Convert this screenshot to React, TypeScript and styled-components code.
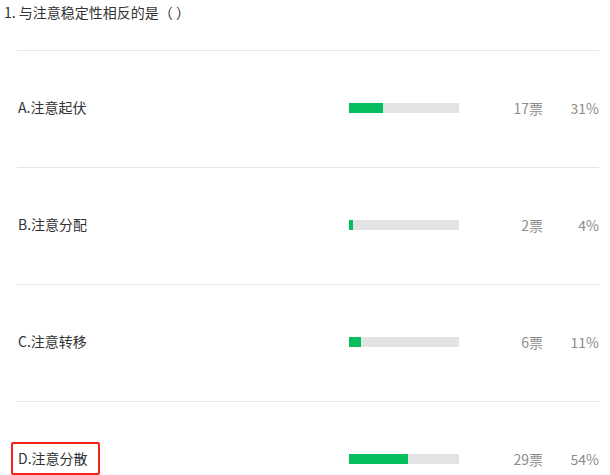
import React from 'react'
import styled, { createGlobalStyle } from 'styled-components'

const GlobalStyle = createGlobalStyle`
  body {
    margin: 0;
    background: #fff;
    font-family: "Microsoft YaHei", "Noto Sans CJK SC", "Noto Sans", sans-serif;
  }
`

interface Option {
  label: string
  votes: number
  percent: number
  marked?: boolean
}

const options: Option[] = [
  { label: 'A.注意起伏', votes: 17, percent: 31 },
  { label: 'B.注意分配', votes: 2, percent: 4 },
  { label: 'C.注意转移', votes: 6, percent: 11 },
  { label: 'D.注意分散', votes: 29, percent: 54, marked: true },
]

const Page = styled.div`
  width: 610px;
  height: 475px;
  overflow: hidden;
`
const Title = styled.div`
  height: 50px;
  padding: 2px 0 0 4px;
  box-sizing: border-box;
  font-size: 14px;
  line-height: 20px;
  color: #333;
`
const List = styled.div`
  margin: 0 11px 0 17px;
`
const Row = styled.div`
  display: flex;
  align-items: center;
  height: 117px;
  box-sizing: border-box;
  border-top: 1px solid #e6e6e6;
  padding-bottom: 3px;
`
const Label = styled.div<{ $marked?: boolean }>`
  flex: 0 0 auto;
  margin-left: -6px;
  padding: 5px 10px 5px 5px;
  border: 2px solid ${p => (p.$marked ? '#f5221b' : 'transparent')};
  border-radius: 2px;
  font-size: 14px;
  line-height: 19px;
  color: #333;
`
const Spacer = styled.div`
  flex: 1;
`
const Track = styled.div`
  width: 110px;
  height: 10px;
  background: #e2e3e5;
  display: flex;
`
const Fill = styled.div`
  height: 100%;
  background: #07be5e;
`
const Votes = styled.div`
  width: 84px;
  text-align: right;
  font-size: 14px;
  color: #8c8c8c;
`
const Percent = styled.div`
  width: 56px;
  text-align: right;
  font-size: 14px;
  color: #8c8c8c;
`

export default function App() {
  return (
    <Page>
      <GlobalStyle />
      <Title>1. 与注意稳定性相反的是（ ）</Title>
      <List>
        {options.map(o => (
          <Row key={o.label}>
            <Label $marked={o.marked}>{o.label}</Label>
            <Spacer />
            <Track>
              <Fill style={{ width: `${Math.max(o.percent, 4)}%` }} />
            </Track>
            <Votes>{o.votes}票</Votes>
            <Percent>{o.percent}%</Percent>
          </Row>
        ))}
      </List>
    </Page>
  )
}
